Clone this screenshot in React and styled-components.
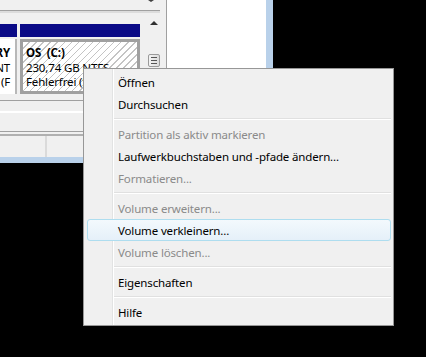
import React from "react";
import styled, { createGlobalStyle } from "styled-components";

const Global = createGlobalStyle`
  html, body {
    margin: 0;
    background: #000;
  }
  body {
    font-family: "Noto Sans", "Open Sans", sans-serif;
    font-size: 11.5px;
    letter-spacing: -0.15px;
  }
`;

const Screen = styled.div`
  position: relative;
  width: 426px;
  height: 357px;
  background: #000;
  overflow: hidden;
`;

const Frame = styled.div`
  width: 266px;
  height: 157px;
  border-right: 7px solid #b9d1ea;
  border-bottom: 6px solid #b9d1ea;
  background: #f0f0f0;
  display: flex;
  flex-direction: column;
`;

const TopRow = styled.div`
  height: 100px;
  display: flex;
`;

const DiskPane = styled.div`
  width: 166px;
  display: flex;
  flex-direction: column;
`;

const UpperEdge = styled.div`
  height: 11px;
  width: 160px;
  border-bottom: 1px solid #a0a0a0;
  box-shadow: 0 2px 0 #dcdcdc;
  display: flex;
  justify-content: flex-end;
  align-items: flex-start;
  padding-right: 6px;
  box-sizing: border-box;
`;

const TinyArrow = styled.div`
  width: 0;
  height: 0;
  border-left: 3px solid transparent;
  border-right: 3px solid transparent;
  border-top: 2px solid #404040;
`;

const DiskBody = styled.div`
  flex: 1;
  display: flex;
  padding-top: 3px;
  padding-right: 5px;
`;

const DiskArea = styled.div`
  flex: 1;
  display: flex;
  gap: 3px;
  padding-top: 10px;
  overflow: hidden;
`;

const Partition = styled.div`
  width: ${(p) => p.$w}px;
  display: flex;
  flex-direction: column;
`;

const PartBar = styled.div`
  height: 13px;
  background: #0a0a86;
`;

const PartBox = styled.div`
  height: 55px;
  box-sizing: border-box;
  margin-top: 2px;
  display: flex;
  flex-direction: column;
  line-height: 14.5px;
  color: #000;
  overflow: hidden;
  ${(p) =>
    p.$hatched
      ? `
    border: 3px solid #a0a0a0;
    padding: 4px 0 0 3px;
    background: repeating-linear-gradient(135deg, #fff 0 4px, #c4c4c4 4px 5px);
  `
      : `
    background: #fff;
    border-right: 2px solid #b8b8b8;
    padding: 7px 5px 0 0;
  `}
`;

const PartLine = styled.div`
  display: flex;
  justify-content: ${(p) => (p.$right ? "flex-end" : "flex-start")};
  white-space: nowrap;
  font-weight: ${(p) => (p.$bold ? 700 : 400)};
  span {
    flex-shrink: 0;
  }
`;

const VScroll = styled.div`
  width: 15px;
  display: flex;
  flex-direction: column;
  align-items: center;
  padding-top: 7px;
  gap: 29px;
`;

const UpArrow = styled.div`
  width: 0;
  height: 0;
  border-left: 4px solid transparent;
  border-right: 4px solid transparent;
  border-bottom: 4px solid #303030;
`;

const Thumb = styled.div`
  width: 12px;
  height: 13px;
  box-sizing: border-box;
  border: 1px solid #9a9a9a;
  border-radius: 2px;
  background: linear-gradient(to right, #f4f4f4, #dcdcdc);
  display: flex;
  flex-direction: column;
  justify-content: center;
  align-items: center;
  gap: 2px;
  span {
    width: 6px;
    height: 1px;
    background: #555;
  }
`;

const SidePanel = styled.div`
  flex: 1;
  background: #fff;
  border-left: 1px solid #a0a0a0;
`;

const BottomArea = styled.div`
  flex: 1;
  display: flex;
  flex-direction: column;
  border-top: 1px solid #a0a0a0;
`;

const HScroll = styled.div`
  height: 30px;
  border-bottom: 1px solid #a0a0a0;
  background: linear-gradient(#f0f0f0 10px, #fff 10px, #fff 12px, #f0f0f0 12px);
`;

const StatusBar = styled.div`
  flex: 1;
  border-top: 2px solid #b0b0b0;
  margin-top: 2px;
  display: flex;
`;

const StatusCell = styled.div`
  width: ${(p) => p.$w}px;
  border-right: 2px solid #dadada;
`;

const Menu = styled.div`
  position: absolute;
  left: 83px;
  top: 68px;
  width: 311px;
  box-sizing: border-box;
  border: 1px solid #979797;
  padding: 2px 0;
  background: linear-gradient(
    to right,
    #f0f0f0 28px,
    #e2e3e3 28px,
    #e2e3e3 29px,
    #fff 29px,
    #fff 30px,
    #f0f0f0 30px
  );
  display: flex;
  flex-direction: column;
`;

const Item = styled.div`
  height: 22px;
  box-sizing: border-box;
  margin: 0 2px 0 3px;
  padding-left: 31px;
  display: flex;
  align-items: center;
  white-space: nowrap;
  color: ${(p) => (p.$disabled ? "#8a8a8a" : "#000")};
  border-radius: 3px;
  ${(p) =>
    p.$hot &&
    `
    border: 1px solid #aeddef;
    padding-left: 30px;
    background: linear-gradient(#f3f9fd, #e5f0f9);
  `}
`;

const Separator = styled.div`
  height: 8px;
  margin: 0 2px 0 30px;
  display: flex;
  flex-direction: column;
  justify-content: center;
  &::before {
    content: "";
    height: 1px;
    background: #e0e0e0;
  }
  &::after {
    content: "";
    height: 1px;
    background: #fff;
  }
`;

const menu = [
  { label: "Öffnen" },
  { label: "Durchsuchen" },
  "sep",
  { label: "Partition als aktiv markieren", disabled: true },
  { label: "Laufwerkbuchstaben und -pfade ändern..." },
  { label: "Formatieren...", disabled: true },
  "sep",
  { label: "Volume erweitern...", disabled: true },
  { label: "Volume verkleinern...", hot: true },
  { label: "Volume löschen...", disabled: true },
  "sep",
  { label: "Eigenschaften" },
  "sep",
  { label: "Hilfe" },
];

export default function App() {
  return (
    <Screen>
      <Global />
      <Frame>
        <TopRow>
          <DiskPane>
            <UpperEdge>
              <TinyArrow />
            </UpperEdge>
            <DiskBody>
              <DiskArea>
                <Partition $w={17}>
                  <PartBar />
                  <PartBox>
                    <PartLine $right $bold>
                      <span>RECOVERY</span>
                    </PartLine>
                    <PartLine $right>
                      <span>12,00 GB NT</span>
                    </PartLine>
                    <PartLine $right>
                      <span>Fehlerfrei (F</span>
                    </PartLine>
                  </PartBox>
                </Partition>
                <Partition $w={120}>
                  <PartBar />
                  <PartBox $hatched>
                    <PartLine $bold>
                      <span>OS&nbsp;&nbsp;(C:)</span>
                    </PartLine>
                    <PartLine>
                      <span>230,74 GB NTFS</span>
                    </PartLine>
                    <PartLine>
                      <span>Fehlerfrei (Startpartition)</span>
                    </PartLine>
                  </PartBox>
                </Partition>
              </DiskArea>
              <VScroll>
                <UpArrow />
                <Thumb>
                  <span />
                  <span />
                  <span />
                </Thumb>
              </VScroll>
            </DiskBody>
          </DiskPane>
          <SidePanel />
        </TopRow>
        <BottomArea>
          <HScroll />
          <StatusBar>
            <StatusCell $w={45} />
          </StatusBar>
        </BottomArea>
      </Frame>

      <Menu>
        {menu.map((m, i) =>
          m === "sep" ? (
            <Separator key={i} />
          ) : (
            <Item key={i} $disabled={m.disabled} $hot={m.hot}>
              {m.label}
            </Item>
          )
        )}
      </Menu>
    </Screen>
  );
}
